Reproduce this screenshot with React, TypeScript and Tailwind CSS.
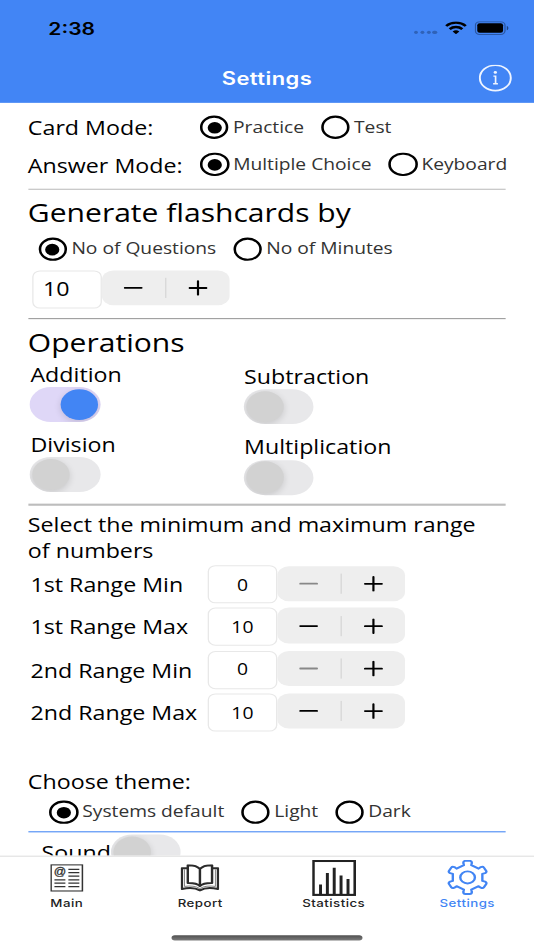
import { useState } from "react";
import type { ReactNode } from "react";

const ranges = [
  { label: "1st Range Min", value: 0 },
  { label: "1st Range Max", value: 10 },
  { label: "2nd Range Min", value: 0 },
  { label: "2nd Range Max", value: 10 },
];

// outline of the six-knobbed gear in the tab bar, centred on 16,16
const gearPath = () => {
  const parts: string[] = [];
  for (let k = 0; k < 6; k++) {
    const a = ((-90 + k * 60) * Math.PI) / 180;
    const p = (r: number, w: number) =>
      `${(16 + r * Math.cos(a) - w * Math.sin(a)).toFixed(2)} ${(16 + r * Math.sin(a) + w * Math.cos(a)).toFixed(2)}`;
    parts.push(
      `${k === 0 ? "M" : "L"}${p(11.2, -2.8)} L${p(13.3, -3.2)} Q${p(15.1, -3.2)} ${p(15.1, -1.6)} L${p(15.1, 1.6)} Q${p(15.1, 3.2)} ${p(13.3, 3.2)} L${p(11.2, 2.8)}`
    );
  }
  return parts.join(" ") + "Z";
};

function Radio({ label, checked, onSelect }: { label: string; checked: boolean; onSelect: () => void }) {
  return (
    <button onClick={onSelect} className="flex items-center gap-[3.2px]">
      <span className="flex size-[22.4px] items-center justify-center rounded-full border-2 border-black">
        {checked && <span className="size-[11px] rounded-full bg-black" />}
      </span>
      <span className="pb-[1.6px] text-[14.9px] leading-5 whitespace-nowrap text-[#333]">{label}</span>
    </button>
  );
}

function RadioGroup({ options }: { options: string[] }) {
  const [selected, setSelected] = useState(options[0]);
  return (
    <div className="flex items-center gap-[13.2px]">
      {options.map((o) => (
        <Radio key={o} label={o} checked={selected === o} onSelect={() => setSelected(o)} />
      ))}
    </div>
  );
}

function Toggle({ initial = false }: { initial?: boolean }) {
  const [on, setOn] = useState(initial);
  return (
    <button
      onClick={() => setOn(!on)}
      className={`-ml-[0.2px] flex h-[33px] w-[54.2px] shrink-0 items-center overflow-hidden rounded-full px-[1.6px] ${on ? "justify-end bg-[#dfd7f7]" : "bg-[#e8e8ea]"}`}
    >
      <span
        className={`size-[29.4px] rounded-full shadow-[0_2px_6px_rgba(0,0,0,0.14)] ${on ? "bg-[#4285f4]" : "bg-[#d2d2d2]"}`}
      />
    </button>
  );
}

function Stepper({ value, onChange }: { value: number; onChange: (v: number) => void }) {
  return (
    <div className="flex h-[33.6px] w-[99.2px] items-center rounded-[9px] bg-[#eee]">
      <button onClick={() => onChange(Math.max(0, value - 1))} className="flex flex-1 justify-center">
        <svg width="15" height="15" viewBox="0 0 15 15" stroke={value === 0 ? "#888" : "#000"} strokeWidth="1.7" strokeLinecap="round">
          <path d="M.7 7.5h13" />
        </svg>
      </button>
      <span className="h-[19px] w-px bg-[#d6d6d6]" />
      <button onClick={() => onChange(value + 1)} className="flex flex-1 justify-center">
        <svg width="15" height="15" viewBox="0 0 15 15" stroke="#000" strokeWidth="1.7" strokeLinecap="round">
          <path d="M1 7.6h13M7.5 1.1v13" />
        </svg>
      </button>
    </div>
  );
}

function Field({ children, className }: { children: ReactNode; className: string }) {
  return (
    <div className={`flex h-[36.2px] w-[53.3px] items-center rounded-[6px] border border-[#e8e8e8] bg-white ${className}`}>
      {children}
    </div>
  );
}

function RangeRow({ label, initial, first }: { label: string; initial: number; first: boolean }) {
  const [value, setValue] = useState(initial);
  return (
    <div className="flex h-[35.8px] items-start">
      <span className="w-[137.7px] text-[18px] leading-[37.4px] whitespace-nowrap">{label}</span>
      <Field className="justify-center text-[15px]">{value}</Field>
      <div className={first ? "pt-[0.7px]" : ""}>
        <Stepper value={value} onChange={setValue} />
      </div>
    </div>
  );
}

function Operation({ label, initial }: { label: string; initial?: boolean }) {
  return (
    <div>
      <div className="mb-[2.9px] text-[18px] leading-[18.2px]">{label}</div>
      <Toggle initial={initial} />
    </div>
  );
}

function Tab({ label, icon, active }: { label: string; icon: ReactNode; active?: boolean }) {
  return (
    <button className={`flex flex-1 flex-col items-center ${active ? "text-[#4285f4]" : "text-[#222]"}`}>
      <span className="flex h-[39.5px] items-center justify-center">{icon}</span>
      <span className="-mt-[2px] font-[Inter,sans-serif] text-[10.3px] leading-[10px] font-medium tracking-[0.35px]">{label}</span>
    </button>
  );
}

const MainIcon = () => (
  <svg width="25.5" height="26" viewBox="0 0 25.5 26" fill="none" stroke="#333" strokeWidth="1.2">
    <rect x=".6" y=".6" width="24.3" height="24.8" />
    <path d="M14 5h8.5M14 8h8.5M14 11.2h8.5M14 14.8h8.5M14 18h8.5M14 21.2h8.5M3.2 14.8h8.5M3.2 18h8.5M3.2 21.2h8.5" />
    <text x="7.4" y="10.7" fontSize="9.5" fontFamily="Liberation Sans, sans-serif" textAnchor="middle" fill="#333" stroke="#333" strokeWidth=".3">
      @
    </text>
  </svg>
);

const ReportIcon = () => (
  <svg width="30" height="26" viewBox="0 0 30 26" fill="none" stroke="#2b2b2b" strokeWidth="1.9" strokeLinejoin="round">
    <path d="M15 4.6C12.8 1.5 9.5.9 5.6 1v16.7c4-.1 7.2.3 9.4 2.9 2.2-2.6 5.4-3 9.4-2.9V1C20.5.9 17.2 1.5 15 4.6zM15 4.6v16" />
    <path d="M5.6 3.9H1v19.6c5.5-1.5 10.5-1.2 14 1.3 3.5-2.5 8.5-2.8 14-1.3V3.9h-4.6" />
    <path d="M3 5v16c4.6-.8 9-.3 12 2 3-2.300 7.400-2.800 12-2V5" strokeWidth=".5" />
  </svg>
);

const StatisticsIcon = () => (
  <svg width="34" height="34" viewBox="0 0 34 34" fill="none" stroke="#222" strokeWidth="2.3">
    <rect x="1" y="1" width="32" height="32" strokeWidth="2" />
    <path d="M6.5 33V23.2M11.8 33V12.4M17.1 33V7.3M22.4 33V14.6M27.8 33V18.1" />
  </svg>
);

const SettingsIcon = () => (
  <svg width="33" height="33" viewBox="0 0 32 32" fill="none" stroke="#4285f4" strokeWidth="1.8" strokeLinejoin="round">
    <path d={gearPath()} />
    <circle cx="16" cy="16" r="5.5" />
  </svg>
);

export default function App() {
  const [questions, setQuestions] = useState(10);

  return (
    <div className="h-[950px] w-[534px] overflow-hidden bg-white">
      {/* 414x896 phone screen stretched over the window */}
      <div className="flex h-[896px] w-[414px] origin-top-left scale-x-[1.2899] scale-y-[1.0603] flex-col bg-white font-['Open_Sans',sans-serif] text-black">
        <header className="h-[96.7px] shrink-0 bg-[#4285f5] font-[Inter,sans-serif]">
          <div className="flex h-[52px] items-center pr-[19.5px] pl-[37.5px]">
            <span className="pt-px text-[16.3px] leading-5 font-semibold">2:38</span>
            <div className="ml-auto flex items-center">
              <div className="mt-[9px] mr-[6.5px] flex gap-[1.6px]">
                <i className="size-[3.1px] rounded-full bg-[#2f62b8]" />
                <i className="size-[3.1px] rounded-full bg-[#2f62b8]" />
                <i className="size-[3.1px] rounded-full bg-[#2f62b8]" />
                <i className="size-[3.1px] rounded-full bg-[#2f62b8]" />
              </div>
              <svg width="17" height="12.5" viewBox="0 0 17 12.5" fill="none" stroke="#000" strokeWidth="2.2">
                <path d="M.9 4.5a10.8 10.8 0 0 1 15.2 0M3.6 7.5a7 7 0 0 1 9.8 0" />
                <path d="M8.5 12.3 5.9 9.7a3.7 3.7 0 0 1 5.2 0z" fill="#000" stroke="none" />
              </svg>
              <svg className="ml-[6px]" width="26.5" height="13" viewBox="0 0 26.5 13" fill="none">
                <rect x=".5" y=".5" width="23" height="12" rx="3.4" stroke="#2a57a3" />
                <rect x="2" y="2" width="20" height="9" rx="1.9" fill="#000" />
                <path d="M24.9 4.5v4c1.6-.6 1.6-3.4 0-4z" fill="#1f4582" />
              </svg>
            </div>
          </div>
          <div className="grid h-[43px] grid-cols-3 items-center">
            <span />
            <h1 className="text-center text-[17px] leading-5 font-semibold tracking-[0.35px] text-white">Settings</h1>
            <svg className="mr-[16.7px] justify-self-end" width="26" height="26" viewBox="0 0 26 26" fill="none" stroke="#eef4ff" strokeWidth="1.5">
              <circle cx="13" cy="12.5" r="12" />
              <circle cx="13" cy="7.3" r="1.3" fill="#eef4ff" stroke="none" />
              <path d="M11.5 10.8h1.7v7.4M11.3 18h3.7" strokeWidth="1.3" />
            </svg>
          </div>
        </header>

        <main className="h-[710.4px] shrink-0 overflow-hidden px-[21.6px] pt-[5.9px]">
          <div className="flex h-[35px] items-center">
            <span className="w-[133.5px] shrink-0 text-[18px] leading-6">Card Mode:</span>
            <RadioGroup options={["Practice", "Test"]} />
          </div>
          <div className="flex h-[35px] items-center">
            <span className="w-[133.6px] shrink-0 pt-px text-[18px] leading-6 whitespace-nowrap">Answer Mode:</span>
            <RadioGroup options={["Multiple Choice", "Keyboard"]} />
          </div>
          <div className="mt-[5.1px] h-[1.2px] bg-[#bdbdbd]" />

          <h2 className="text-[23.3px] leading-[43px]">Generate flashcards by</h2>
          <div className="flex h-[26.6px] items-center pt-[0.2px] pl-[8.2px]">
            <RadioGroup options={["No of Questions", "No of Minutes"]} />
          </div>
          <div className="mt-[6.2px] flex h-[36.4px] items-start pl-[3.8px]">
            <Field className="pl-[7px] text-[18px]">{questions}</Field>
            <div className="pl-[0.2px]">
              <Stepper value={questions} onChange={setQuestions} />
            </div>
          </div>
          <div className="mt-[8.6px] h-[1.6px] bg-[#999]" />

          <h2 className="pt-[1.6px] text-[23.3px] leading-[41px]">Operations</h2>
          <div className="flex pl-[2px]">
            <div className="flex w-[165.6px] flex-col gap-[12.2px]">
              <Operation label="Addition" initial />
              <Operation label="Division" />
            </div>
            <div className="flex flex-col gap-[12.2px] pt-[2.4px]">
              <Operation label="Subtraction" />
              <Operation label="Multiplication" />
            </div>
          </div>
          <div className="mt-[8.8px] h-[1.2px] bg-[#bdbdbd]" />

          <p className="pt-[6.1px] text-[18px] leading-[24.3px]">
            Select the minimum and maximum range
            <br />
            of numbers
          </p>
          <div className="mt-[1.8px] flex flex-col gap-[4.45px] pl-[2px]">
            {ranges.map((r, i) => (
              <RangeRow key={r.label} label={r.label} initial={r.value} first={i === 0} />
            ))}
          </div>

          <p className="mt-[35.5px] text-[18px] leading-6">Choose theme:</p>
          <div className="flex h-[34.9px] items-center pb-[0.4px] pl-[16.6px]">
            <RadioGroup options={["Systems default", "Light", "Dark"]} />
          </div>
          <div className="h-px bg-[#4285f4]" />
          <div className="flex pt-[1.8px] pl-[10.6px]">
            <span className="w-[54px] text-[18px] leading-[34.4px]">Sound</span>
            <Toggle />
          </div>
        </main>

        <nav className="flex h-[60px] shrink-0 border-t border-[#dedede] bg-white">
          <Tab label="Main" icon={<MainIcon />} />
          <Tab label="Report" icon={<ReportIcon />} />
          <Tab label="Statistics" icon={<StatisticsIcon />} />
          <Tab label="Settings" icon={<SettingsIcon />} active />
        </nav>
        <div className="mt-[14.5px] ml-[133.4px] h-[5.4px] w-[147.5px] shrink-0 rounded-full bg-linear-to-b from-[#505050] to-[#7c7c7c]" />
      </div>
    </div>
  );
}
